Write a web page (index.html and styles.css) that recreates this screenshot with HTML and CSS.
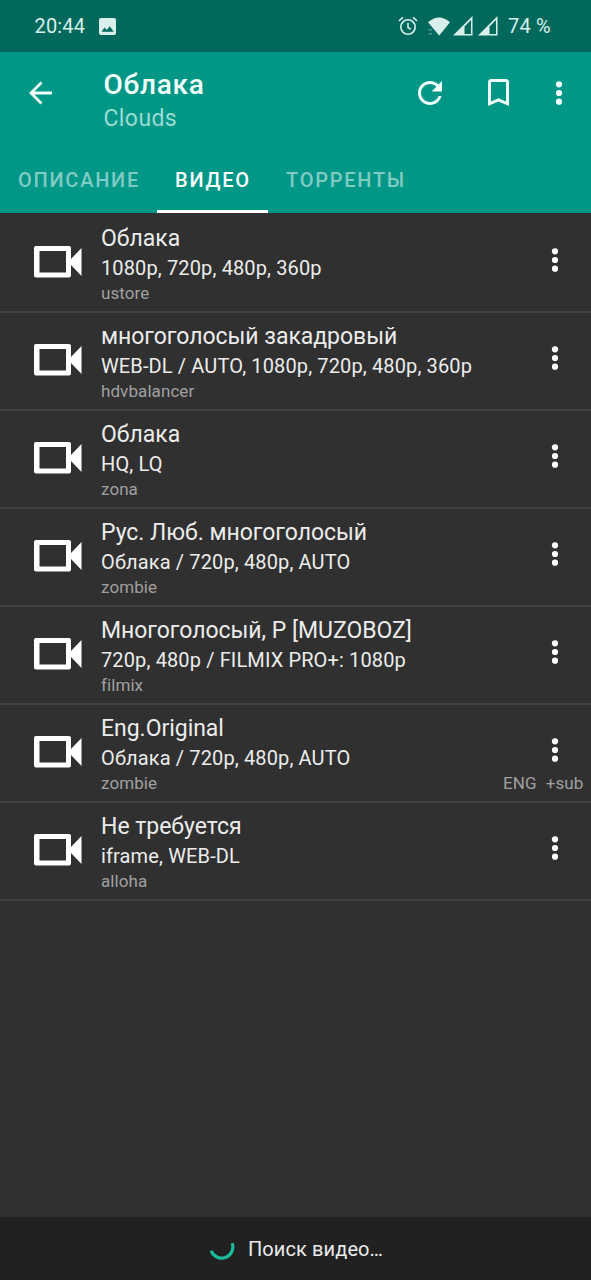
FILE: index.html
```html
<!DOCTYPE html>
<html lang="ru">
<head>
<meta charset="utf-8">
<title>Облака</title>
<link rel="stylesheet" href="styles.css">
</head>
<body>
<svg class="defs" width="0" height="0" aria-hidden="true">
  <symbol id="camera" viewBox="0 0 48 34"><path fill-rule="evenodd" d="M2 1H35Q37 1 37 3V14L47.500 3V31L37 20V30.500Q37 32.500 35 32.500H2Q0 32.500 0 30.500V3Q0 1 2 1ZM5.500 6V27.500H32V6Z"/></symbol>
  <symbol id="dots" viewBox="0 0 8 26"><circle cx="4" cy="4.300" r="3.100"/><circle cx="4" cy="13" r="3.100"/><circle cx="4" cy="21.700" r="3.100"/></symbol>
  <symbol id="signal" viewBox="0 0 20 20"><path fill-rule="evenodd" d="M0 19.500L19.500 0V19.500ZM11.500 18H18V4L11.500 10.500Z"/></symbol>
</svg>
<div class="screen">
  <div class="status">
    <span class="clock">20:44</span>
    <svg class="photo" viewBox="0 0 17 17"><path fill-rule="evenodd" d="M2 0H15Q17 0 17 2V15Q17 17 15 17H2Q0 17 0 15V2Q0 0 2 0ZM2.500 13.800H14.700L10.800 8.300L7.800 12L5.600 9.600Z"/></svg>
    <svg class="alarm" viewBox="0 0 20 20"><circle cx="10" cy="11" r="7.200"/><path d="M1 4.800L5 1.400M19 4.800L15 1.400M10 6.800V11.500L12.800 13.400"/></svg>
    <svg class="wifi" viewBox="0 0 22 19"><path d="M0 5.300Q11 -4.300 22 5.300L11.200 18.500Z"/><path class="faint" d="M.5 12H4V13.500H.5ZM.5 16H4V17.500H.5Z"/></svg>
    <svg class="signal"><use href="#signal"/></svg>
    <svg class="signal second"><use href="#signal"/></svg>
    <span class="battery">74 %</span>
  </div>
  <header class="toolbar">
    <svg class="back" viewBox="0 0 24 24"><path d="M23 12H2M12.500 1.500L2 12L12.500 22.500"/></svg>
    <div class="heading"><h1>Облака</h1><p>Clouds</p></div>
    <svg class="refresh" viewBox="4 4 16 16"><path d="M17.650 6.350C16.200 4.900 14.210 4 12 4c-4.420 0-7.990 3.580-7.990 8s3.570 8 7.990 8c3.730 0 6.840-2.550 7.730-6h-2.080c-.82 2.330-3.040 4-5.650 4-3.310 0-6-2.690-6-6s2.690-6 6-6c1.660 0 3.140.69 4.220 1.780L13 11h7V4l-2.350 2.350z"/></svg>
    <svg class="bookmark" viewBox="5 3 14 18"><path d="M17 3H7c-1.100 0-2 .9-2 2v16l7-3 7 3V5c0-1.100-.9-2-2-2zm0 15l-5-2.180L7 18V5h10v13z"/></svg>
    <svg class="dots"><use href="#dots"/></svg>
  </header>
  <nav class="tabs">
    <span class="tab describe">ОПИСАНИЕ</span>
    <span class="tab active">ВИДЕО</span>
    <span class="tab torrents">ТОРРЕНТЫ</span>
  </nav>
  <main class="list">
    <div class="row"><svg class="camera"><use href="#camera"/></svg><div class="text"><div class="name">Облака</div><div class="quality">1080p, 720p, 480p, 360p</div><div class="source">ustore</div></div><svg class="dots"><use href="#dots"/></svg></div>
    <div class="row"><svg class="camera"><use href="#camera"/></svg><div class="text"><div class="name">многоголосый закадровый</div><div class="quality">WEB-DL / AUTO, 1080p, 720p, 480p, 360p</div><div class="source">hdvbalancer</div></div><svg class="dots"><use href="#dots"/></svg></div>
    <div class="row"><svg class="camera"><use href="#camera"/></svg><div class="text"><div class="name">Облака</div><div class="quality">HQ, LQ</div><div class="source">zona</div></div><svg class="dots"><use href="#dots"/></svg></div>
    <div class="row"><svg class="camera"><use href="#camera"/></svg><div class="text"><div class="name">Рус. Люб. многоголосый</div><div class="quality">Облака / 720p, 480p, AUTO</div><div class="source">zombie</div></div><svg class="dots"><use href="#dots"/></svg></div>
    <div class="row"><svg class="camera"><use href="#camera"/></svg><div class="text"><div class="name">Многоголосый, P [MUZOBOZ]</div><div class="quality">720p, 480p / FILMIX PRO+: 1080p</div><div class="source">filmix</div></div><svg class="dots"><use href="#dots"/></svg></div>
    <div class="row"><svg class="camera"><use href="#camera"/></svg><div class="text"><div class="name">Eng.Original</div><div class="quality">Облака / 720p, 480p, AUTO</div><div class="source"><span>zombie</span><span class="langs"><span>ENG</span><span>+sub</span></span></div></div><svg class="dots"><use href="#dots"/></svg></div>
    <div class="row"><svg class="camera"><use href="#camera"/></svg><div class="text"><div class="name">Не требуется</div><div class="quality">iframe, WEB-DL</div><div class="source">alloha</div></div><svg class="dots"><use href="#dots"/></svg></div>
  </main>
  <footer class="searching">
    <svg class="spinner" viewBox="0 0 26 26"><path d="M2.200 14.700A11.100 11.100 0 1 0 23.200 7.300"/></svg>
    <span>Поиск видео…</span>
  </footer>
</div>
</body>
</html>
```

FILE: styles.css
```css
* { box-sizing: border-box; }
body { margin: 0; background: #303030; color: #ececec; font-family: Roboto, sans-serif; }
svg { display: block; flex: none; fill: currentColor; }
.defs { position: absolute; }
.screen { width: 591px; height: 1280px; display: flex; flex-direction: column; overflow: hidden; }

.status { height: 52px; flex: none; display: flex; align-items: center; padding-left: 34.500px; background: #00695b; color: #d9efeb; font-size: 20px; }
.clock { width: 64px; letter-spacing: .15px; }
.photo { width: 17px; height: 17px; }
.alarm { width: 20px; height: 20px; margin-left: 282.500px; fill: none; stroke: currentColor; stroke-width: 1.600; }
.wifi { width: 22px; height: 19px; margin-left: 10px; }
.faint { opacity: .35; }
.signal { width: 20px; height: 20px; margin-left: 3px; }
.second { margin-left: 5px; }
.battery { margin-left: 10px; white-space: nowrap; letter-spacing: .2px; }

.toolbar { height: 93px; flex: none; display: flex; align-items: flex-start; padding: 0 0 0 29px; background: #009787; color: #f0fffc; }
.back { width: 24px; height: 24px; margin-top: 29px; fill: none; stroke: currentColor; stroke-width: 2.800; }
.heading { width: 312px; margin: 17px 0 0 50.500px; }
.heading h1 { margin: 0; font-size: 28px; line-height: 32px; font-weight: 500; letter-spacing: .7px; }
.heading p { margin: 4px 0 0; font-size: 23px; line-height: 28px; letter-spacing: .4px; color: #9bdcd3; }
.refresh { width: 24px; height: 24px; margin: 29px 0 0 2.500px; }
.bookmark { width: 21px; height: 27px; margin: 27px 0 0 46px; }
.toolbar .dots { margin: 28px 0 0 46px; }
.dots { width: 8px; height: 26px; }

.tabs { height: 68px; flex: none; display: flex; background: #009787; color: #80cbc3; font-size: 20px; font-weight: 500; letter-spacing: 1.750px; line-height: 24px; }
.tab { padding-top: 23px; white-space: nowrap; }
.describe { width: 157px; padding-left: 18px; }
.active { width: 111px; padding-left: 18px; color: #fff; border-bottom: 3px solid #fff; }
.torrents { padding-left: 18px; }

.list { flex: 1; }
.row { height: 98px; display: flex; border-bottom: 2px solid #414141; }
.row:first-child { height: 100px; padding-top: 2px; }
.camera { width: 48px; height: 34px; margin: 30px 19px 0 34px; color: #fff; }
.text { width: 450px; padding-top: 10px; white-space: nowrap; }
.name { font-size: 23px; line-height: 28px; letter-spacing: -.03px; }
.quality { margin-top: 1px; font-size: 20px; line-height: 28px; letter-spacing: .13px; }
.source { display: flex; font-size: 17px; line-height: 22px; letter-spacing: .08px; color: #a0a0a0; }
.langs { display: flex; gap: 9px; margin-left: 346px; }
.row .dots { margin: 31.500px 0 0 -.5px; color: #fff; }

.searching { height: 63px; flex: none; display: flex; align-items: center; padding-left: 209px; background: #212121; font-size: 20px; letter-spacing: .1px; }
.spinner { width: 26px; height: 26px; margin-right: 13px; fill: none; stroke: #1abc9c; stroke-width: 3.200; }
```
